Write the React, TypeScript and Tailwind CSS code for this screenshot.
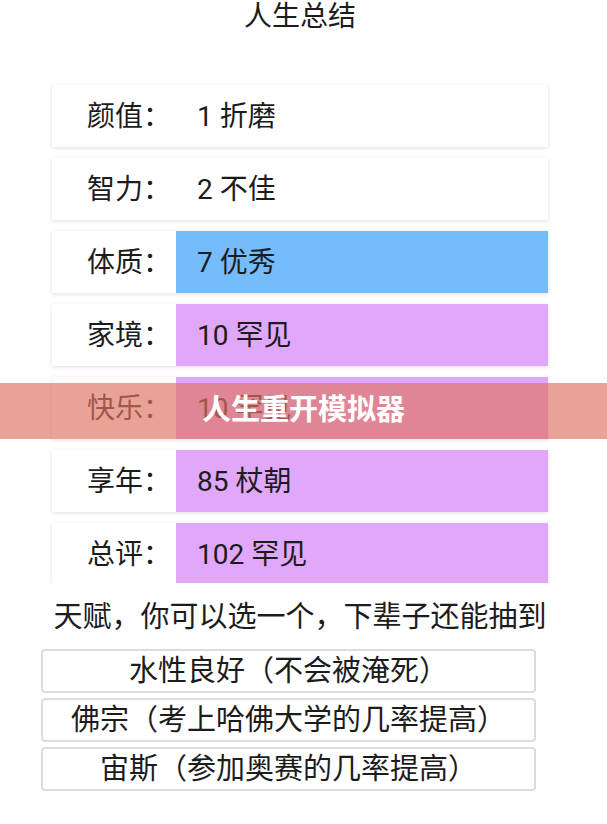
const font = { fontFamily: 'Roboto, "Noto Sans CJK SC", sans-serif' };

const rows = [
  { label: '颜值：', value: '1 折磨', tone: 'bg-white' },
  { label: '智力：', value: '2 不佳', tone: 'bg-white' },
  { label: '体质：', value: '7 优秀', tone: 'bg-[#74bcfc]' },
  { label: '家境：', value: '10 罕见', tone: 'bg-[#e0a7fb]' },
  { label: '快乐：', value: '10 罕见', tone: 'bg-[#e0a7fb]' },
  { label: '享年：', value: '85 杖朝', tone: 'bg-[#e0a7fb]' },
  { label: '总评：', value: '102 罕见', tone: 'bg-[#e0a7fb]' },
];

const talents = [
  '水性良好（不会被淹死）',
  '佛宗（考上哈佛大学的几率提高）',
  '宙斯（参加奥赛的几率提高）',
];

export default function App() {
  return (
    <div className="relative w-[607px] h-[824px] overflow-hidden bg-white text-[#1c1c1c]" style={font}>
      <div className="w-[600px]">
        <h1 className="h-[34px] text-center text-[28px] leading-[34px] font-normal">人生总结</h1>

        <div className="mt-[46px] h-[503px] overflow-hidden pt-[5px]">
          <div className="flex flex-col gap-[11px]">
            {rows.map((r) => (
              <div
                key={r.label}
                className="mx-[52px] flex h-[62px] bg-white shadow-[0_1px_4px_rgba(0,0,0,0.13)]"
              >
                <div className="flex w-[124px] items-center justify-end pr-[5px] pt-[2px] text-[28px]">{r.label}</div>
                <div className={`flex flex-1 items-center pl-[21px] pt-[2px] text-[28px] ${r.tone}`}>{r.value}</div>
              </div>
            ))}
          </div>
        </div>

        <p className="mt-[17px] h-[34px] text-center text-[29px] leading-[34px]">天赋，你可以选一个，下辈子还能抽到</p>

        <div className="mt-[15px] ml-[41px] flex w-[495px] flex-col gap-[5px]">
          {talents.map((t) => (
            <button
              key={t}
              className="h-[44px] rounded-[4px] border-2 border-[#dcdcdc] bg-white text-center text-[29px] leading-[38px] text-[#1c1c1c]"
            >
              {t}
            </button>
          ))}
        </div>
      </div>

      <div className="absolute left-0 right-0 top-[383px] flex h-[56px] items-center justify-center bg-[rgba(222,117,98,0.67)]">
        <span className="text-[29px] font-bold text-white">人生重开模拟器</span>
      </div>
    </div>
  );
}
